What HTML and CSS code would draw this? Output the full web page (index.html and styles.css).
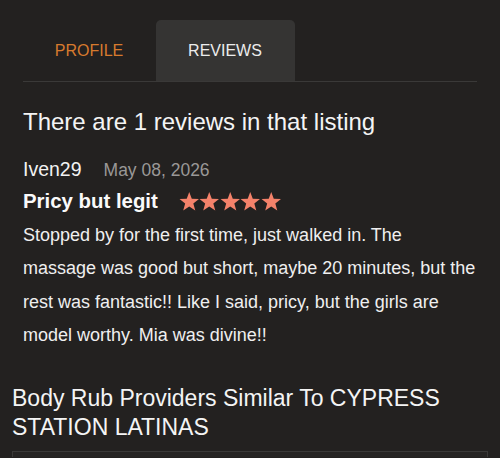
FILE: index.html
```html
<!DOCTYPE html>
<html>
<head>
<meta charset="utf-8">
<link rel="stylesheet" href="styles.css">
</head>
<body>
<div class="page">
  <div class="panel">
    <div class="tabs">
      <div class="tab tab-inactive">PROFILE</div>
      <div class="tab tab-active">REVIEWS</div>
    </div>
    <h2 class="count">There are 1 reviews in that listing</h2>
    <div class="review">
      <div class="meta"><span class="author">Iven29</span><span class="date">May 08, 2026</span></div>
      <div class="title-row">
        <span class="title">Pricy but legit</span>
        <span class="stars">
          <svg class="star" viewBox="0 0 21 20"><path d="M10.5 0L13.09 6.94L20.49 7.26L14.68 11.86L16.67 19L10.5 14.9L4.33 19L6.32 11.86L0.51 7.26L7.91 6.94Z"/></svg>
          <svg class="star" viewBox="0 0 21 20"><path d="M10.5 0L13.09 6.94L20.49 7.26L14.68 11.86L16.67 19L10.5 14.9L4.33 19L6.32 11.86L0.51 7.26L7.91 6.94Z"/></svg>
          <svg class="star" viewBox="0 0 21 20"><path d="M10.5 0L13.09 6.94L20.49 7.26L14.68 11.86L16.67 19L10.5 14.9L4.33 19L6.32 11.86L0.51 7.26L7.91 6.94Z"/></svg>
          <svg class="star" viewBox="0 0 21 20"><path d="M10.5 0L13.09 6.94L20.49 7.26L14.68 11.86L16.67 19L10.5 14.9L4.33 19L6.32 11.86L0.51 7.26L7.91 6.94Z"/></svg>
          <svg class="star" viewBox="0 0 21 20"><path d="M10.5 0L13.09 6.94L20.49 7.26L14.68 11.86L16.67 19L10.5 14.9L4.33 19L6.32 11.86L0.51 7.26L7.91 6.94Z"/></svg>
        </span>
      </div>
      <p class="body">Stopped by for the first time, just walked in. The massage was good but short, maybe 20 minutes, but the rest was fantastic!! Like I said, pricy, but the girls are model worthy. Mia was divine!!</p>
    </div>
  </div>
  <h2 class="similar">Body Rub Providers Similar To CYPRESS STATION LATINAS</h2>
  <div class="card"></div>
</div>
</body>
</html>
```
FILE: styles.css
```css
html, body {
  margin: 0;
  padding: 0;
  background: #232120;
}
body {
  font-family: "Liberation Sans", Arial, sans-serif;
  color: #f2f2f2;
  width: 500px;
  height: 458px;
  overflow: hidden;
}
.page {
  padding: 0 12px;
}
.panel {
  padding: 20px 11px 0 11px;
}
.tabs {
  display: flex;
  border-bottom: 1px solid #3a3938;
  height: 61px;
}
.tab {
  display: flex;
  align-items: center;
  justify-content: center;
  font-size: 16px;
  padding: 0 32px 0 31px;
  height: 61px;
  border-radius: 5px 5px 0 0;
}
.tab-inactive {
  color: #d77a2e;
  width: 70px;
}
.tab-active {
  background: #353433;
  color: #ececec;
  width: 76px;
}
.count {
  margin: 26px 0 0 0;
  font-size: 24px;
  font-weight: normal;
  line-height: 28px;
  color: #f4f4f4;
}
.review {
  margin-top: 21px;
}
.meta {
  display: flex;
  align-items: baseline;
  gap: 22px;
  height: 24px;
  line-height: 24px;
}
.author {
  font-size: 19.5px;
  color: #f2f2f2;
}
.date {
  font-size: 17.5px;
  color: #9a9897;
}
.title-row {
  display: flex;
  align-items: center;
  gap: 21px;
  margin-top: 7px;
  height: 26px;
}
.title {
  font-size: 20.4px;
  font-weight: bold;
  color: #fafafa;
  line-height: 26px;
}
.stars {
  display: flex;
  gap: 0;
  margin-top: 2px;
}
.star {
  width: 20.5px;
  height: 19.5px;
  fill: #f4826a;
}
.body {
  margin: 5px 0 0 0;
  font-size: 18px;
  line-height: 33.3px;
  color: #efefef;
}
.similar {
  margin: 32px 0 0 0;
  font-size: 23px;
  font-weight: normal;
  line-height: 28.5px;
  color: #f4f4f4;
}
.card {
  margin-top: 10px;
  height: 5px;
  border: 1px solid #3a3938;
  border-bottom: 0;
  background: #262423;
}
```
